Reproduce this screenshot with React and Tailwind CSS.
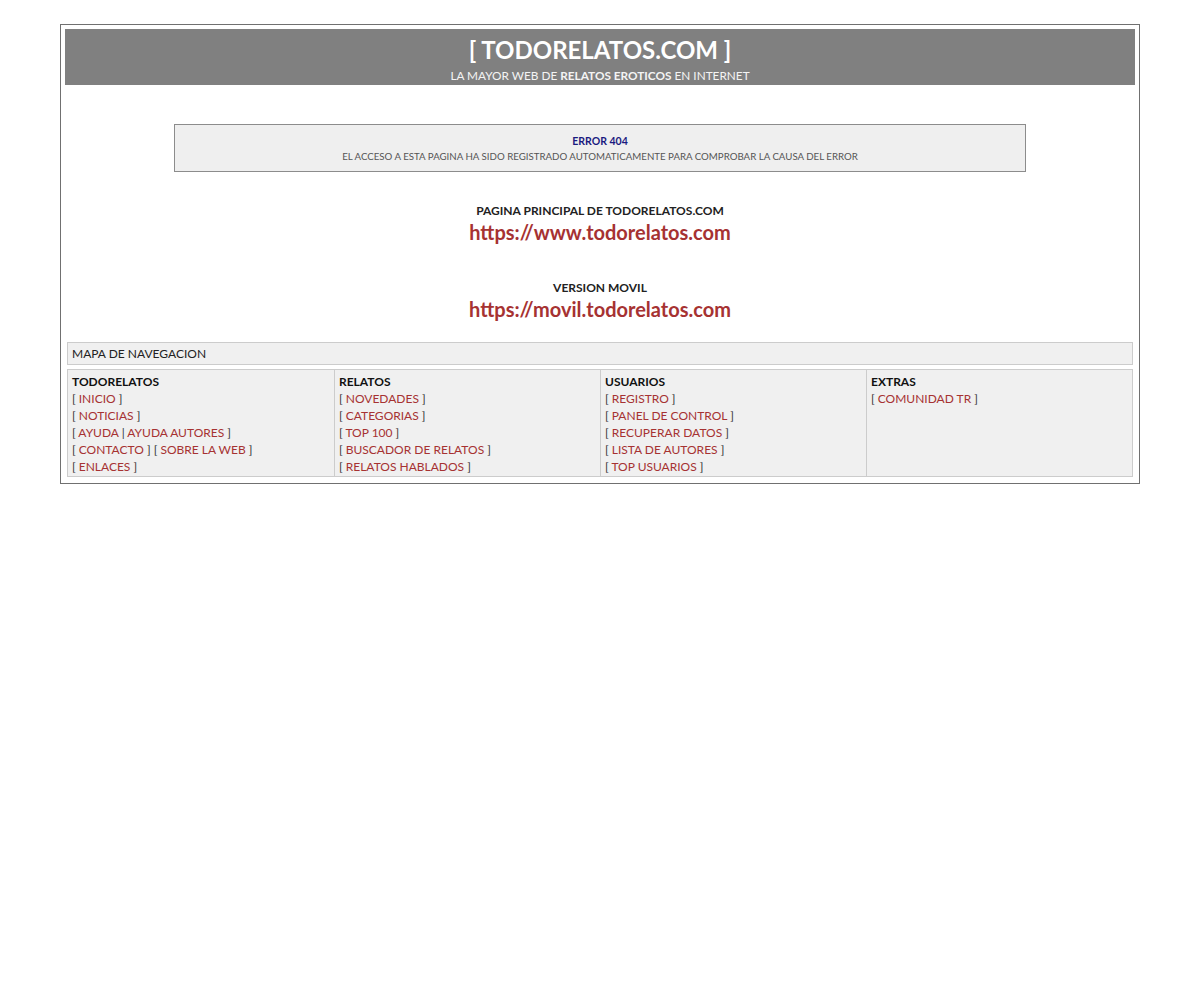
const LINK = "text-[#a63232]";

const L = ({ children }) => <span className={LINK}>{children}</span>;

const columns = [
  {
    title: "TODORELATOS",
    rows: [
      <>[ <L>INICIO</L> ]</>,
      <>[ <L>NOTICIAS</L> ]</>,
      <>[ <L>AYUDA</L> | <L>AYUDA AUTORES</L> ]</>,
      <>[ <L>CONTACTO</L> ] [ <L>SOBRE LA WEB</L> ]</>,
      <>[ <L>ENLACES</L> ]</>,
    ],
  },
  {
    title: "RELATOS",
    rows: [
      <>[ <L>NOVEDADES</L> ]</>,
      <>[ <L>CATEGORIAS</L> ]</>,
      <>[ <L>TOP 100</L> ]</>,
      <>[ <L>BUSCADOR DE RELATOS</L> ]</>,
      <>[ <L>RELATOS HABLADOS</L> ]</>,
    ],
  },
  {
    title: "USUARIOS",
    rows: [
      <>[ <L>REGISTRO</L> ]</>,
      <>[ <L>PANEL DE CONTROL</L> ]</>,
      <>[ <L>RECUPERAR DATOS</L> ]</>,
      <>[ <L>LISTA DE AUTORES</L> ]</>,
      <>[ <L>TOP USUARIOS</L> ]</>,
    ],
  },
  {
    title: "EXTRAS",
    rows: [<>[ <L>COMUNIDAD TR</L> ]</>],
  },
];

export default function App() {
  return (
    <div
      className="min-h-[1000px] bg-white pt-[24px]"
      style={{ fontFamily: "Lato, 'Open Sans', sans-serif" }}
    >
      <div className="mx-auto w-[1080px] border border-[#707070] p-[4px] pb-[6px]">
        {/* Header */}
        <div className="bg-[#808080] text-center text-white h-[56px] pt-[5px]">
          <div className="text-[24px] font-bold leading-[32px]">[ TODORELATOS.COM ]</div>
          <div className="text-[11.8px] leading-[16px] pt-[2px] text-[#f4f4f4]">
            LA MAYOR WEB DE <b>RELATOS EROTICOS</b> EN INTERNET
          </div>
        </div>

        {/* Error box */}
        <div className="mx-auto mt-[39px] w-[852px] h-[48px] border border-[#8c8c8c] bg-[#efefef] text-center pt-[9px]">
          <div className="text-[10.5px] font-bold leading-[15px] text-[#1a1a80]">ERROR 404</div>
          <div className="text-[9.7px] leading-[15px] text-[#555]">
            EL ACCESO A ESTA PAGINA HA SIDO REGISTRADO AUTOMATICAMENTE PARA COMPROBAR LA CAUSA DEL ERROR
          </div>
        </div>

        {/* Links */}
        <div className="text-center mt-[31px]">
          <div className="text-[12px] font-bold leading-[16px] text-[#222]">
            PAGINA PRINCIPAL DE TODORELATOS.COM
          </div>
          <div className={`text-[20px] font-bold leading-[26px] ${LINK}`}>
            https://www.todorelatos.com
          </div>
        </div>
        <div className="text-center mt-[35px]">
          <div className="text-[12px] font-bold leading-[16px] text-[#222]">VERSION MOVIL</div>
          <div className={`text-[20px] font-bold leading-[26px] ${LINK}`}>
            https://movil.todorelatos.com
          </div>
        </div>

        {/* Navigation map */}
        <div className="mx-[2px] mt-[20px] h-[23px] border border-[#cccccc] bg-[#f0f0f0] px-[4px] text-[12px] leading-[21px] text-[#222]">
          MAPA DE NAVEGACION
        </div>
        <div className="mx-[2px] mt-[4px] grid grid-cols-4 border border-[#cccccc] bg-[#f0f0f0]">
          {columns.map((col, i) => (
            <div
              key={col.title}
              className={`px-[4px] pt-[3px] pb-[1px] text-[12px] leading-[17px] text-[#333] ${
                i > 0 ? "border-l border-[#cccccc]" : ""
              }`}
            >
              <div className="font-bold text-[#111]">{col.title}</div>
              {col.rows.map((r, j) => (
                <div key={j}>{r}</div>
              ))}
            </div>
          ))}
        </div>
      </div>
    </div>
  );
}
